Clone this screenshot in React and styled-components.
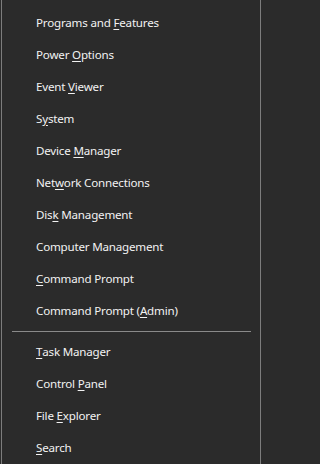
import React from "react"
import styled, { createGlobalStyle } from "styled-components"

const GlobalStyle = createGlobalStyle`
    html, body {
        margin: 0;
        padding: 0;
        background: #2b2b2b;
    }
`

const groups = [
    [
        ["Programs and ", "F", "eatures"],
        ["Power ", "O", "ptions"],
        ["Event ", "V", "iewer"],
        ["S", "y", "stem"],
        ["Device ", "M", "anager"],
        ["Net", "w", "ork Connections"],
        ["Dis", "k", " Management"],
        ["Computer Management", "", ""],
        ["", "C", "ommand Prompt"],
        ["Command Prompt (", "A", "dmin)"],
    ],
    [
        ["", "T", "ask Manager"],
        ["Control ", "P", "anel"],
        ["File ", "E", "xplorer"],
        ["", "S", "earch"],
    ],
]

export default function App() {
    return (
        <>
            <GlobalStyle />
            <Menu>
                {groups.map((items, i) => (
                    <React.Fragment key={i}>
                        {i > 0 && <Separator />}
                        {items.map(([before, key, after]) => (
                            <Item key={before + key + after}>
                                {before}
                                {key && <Key>{key}</Key>}
                                {after}
                            </Item>
                        ))}
                    </React.Fragment>
                ))}
            </Menu>
        </>
    )
}

const Menu = styled.div`
    box-sizing: border-box;
    width: 260px;
    height: 464px;
    margin-left: 1px;
    padding-top: 6px;
    background: #2b2b2b;
    border-left: 1px solid #7d7d7d;
    border-right: 1px solid #7d7d7d;
    display: flex;
    flex-direction: column;
    font-family: "Noto Sans", "Open Sans", sans-serif;
    font-size: 11.6px;
    letter-spacing: -0.2px;
    color: #f2f2f2;
`

const Item = styled.div`
    height: 32px;
    display: flex;
    align-items: center;
    padding-left: 34px;
    white-space: pre;
`

const Key = styled.span`
    text-decoration: underline;
    text-underline-offset: 2px;
`

const Separator = styled.div`
    height: 1px;
    margin: 5px 9px 3px 10px;
    background: #8a8a8a;
`
